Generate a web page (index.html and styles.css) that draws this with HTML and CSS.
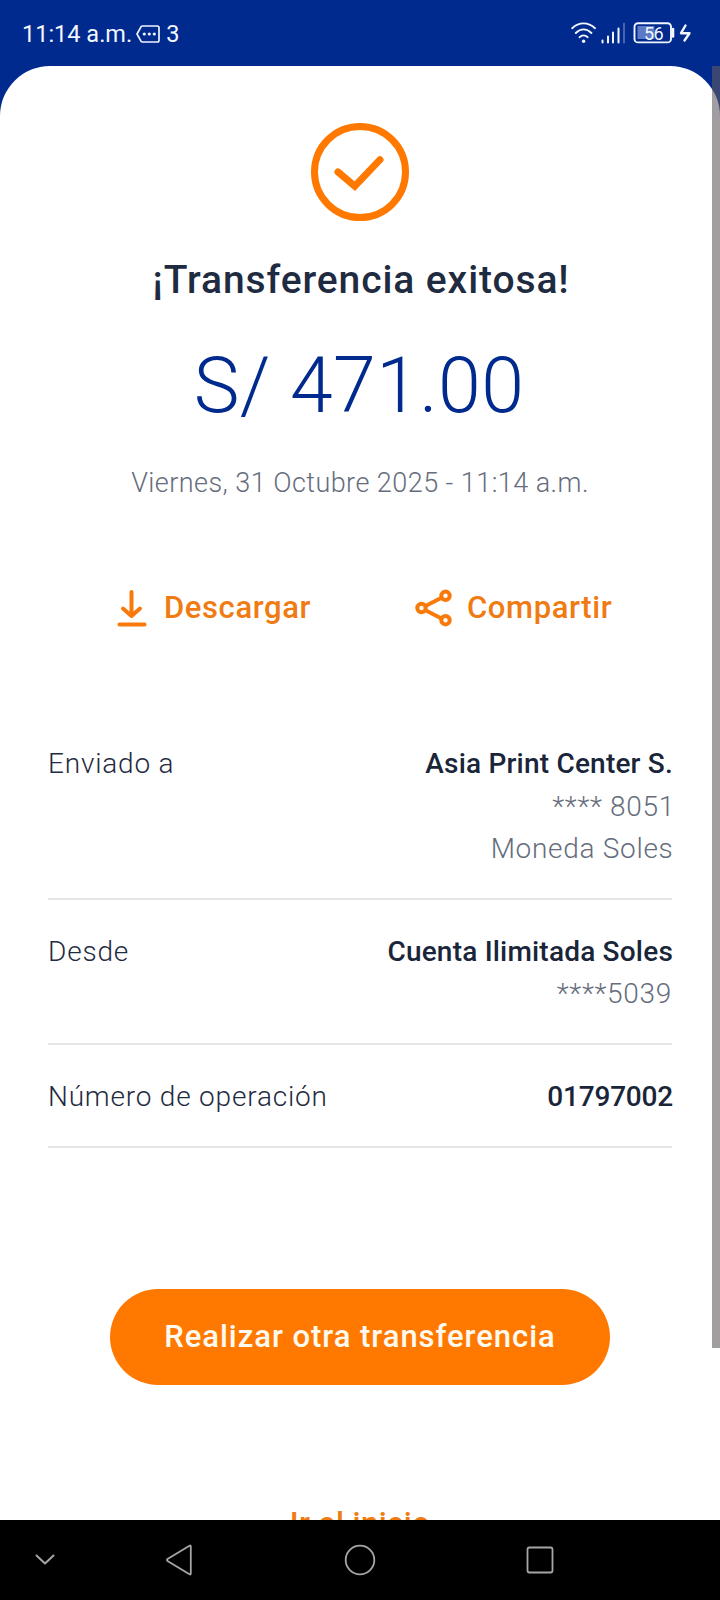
FILE: index.html
```html
<!DOCTYPE html>
<html lang="es">
<head>
<meta charset="utf-8">
<title>Transferencia exitosa</title>
<link rel="stylesheet" href="styles.css">
</head>
<body>
<div class="screen">
  <header class="status">
    <span class="clock">11:14 a.m.</span>
    <svg class="msg" width="24" height="18" viewBox="0 0 24 18" fill="none" stroke="#eef4ff" stroke-width="1.7" stroke-linejoin="round">
      <path d="M6.5 1H21.3Q23 1 23 2.7V15.3Q23 17 21.3 17H6.5Q5.6 17 5 16.2L1 9L5 1.8Q5.6 1 6.5 1Z"/>
      <g fill="#eef4ff" stroke="none"><circle cx="8.3" cy="9" r="1.6"/><circle cx="13.3" cy="9" r="1.6"/><circle cx="18.3" cy="9" r="1.6"/></g>
    </svg>
    <span class="count">3</span>
    <svg class="signals" width="122" height="24" viewBox="0 0 122 24" fill="none" stroke="#f2f7ff" stroke-linecap="round">
      <path stroke-width="1.9" d="M1.2 6.2C8-.2 17-.2 24 6.2M4.8 11C9.5 6.200 15.700 6.200 20.400 11M8.600 15.200C11 12.700 14.200 12.700 16.600 15.200"/>
      <circle cx="12.600" cy="19.300" r="1.700" fill="#f2f7ff" stroke="none"/>
      <path stroke-width="2" d="M31.500 18.500V20.500M37 14.500V20.500M42 10.500V20.500M47.500 6.500V20.500"/>
      <path stroke="#4964b3" stroke-width="2" d="M53 1.500V20.500"/>
      <rect x="66.500" y="4" width="17" height="13" fill="#5c7ac6" stroke="none"/>
      <rect x="63.500" y="1.200" width="36.500" height="19.200" rx="3.500" stroke-width="1.900"/>
      <path d="M102 7V14.500" stroke-width="2.600"/>
      <text x="73" y="17.600" class="level">56</text>
      <path d="M114.500 3.500L110 11.200H118.500L113.500 18.500" stroke-width="2.400" stroke-linejoin="round"/>
    </svg>
  </header>

  <main class="content">
    <section class="card">
      <svg class="check" width="98" height="98" viewBox="0 0 98 98" fill="none" stroke="#ff7800" stroke-width="7">
        <circle cx="49" cy="49" r="45.500"/>
        <path d="M27 49L43.800 63.200L69 36.700" stroke-linecap="round"/>
      </svg>
      <h1 class="title">¡Transferencia exitosa!</h1>
      <p class="amount">S/ 471.00</p>
      <p class="date">Viernes, 31 Octubre 2025 - 11:14 a.m.</p>

      <div class="actions">
        <a class="action">
          <svg width="30" height="38" viewBox="0 0 30 38" fill="none" stroke="#f97a0a" stroke-width="4" stroke-linecap="round" stroke-linejoin="round">
            <path d="M14.500 3V27M6 19.500L14.500 27L23 19.500M2.500 35.500H27.500"/>
          </svg>
          <span>Descargar</span>
        </a>
        <a class="action share">
          <svg width="38" height="38" viewBox="0 0 38 38" fill="none" stroke="#f97a0a" stroke-width="4">
            <path d="M10 17.200L26.500 8.800M10 21L26.500 29.500"/>
            <circle cx="6.500" cy="19" r="4.200"/><circle cx="30.500" cy="6.800" r="4.200"/><circle cx="30.500" cy="31.200" r="4.200"/>
          </svg>
          <span>Compartir</span>
        </a>
      </div>

      <dl class="details">
        <div class="row">
          <dt class="label">Enviado a</dt>
          <dd class="value"><strong>Asia Print Center S.</strong><span class="account">**** 8051</span><span class="currency">Moneda Soles</span></dd>
        </div>
        <div class="row">
          <dt class="label">Desde</dt>
          <dd class="value"><strong>Cuenta Ilimitada Soles</strong><span>****5039</span></dd>
        </div>
        <div class="row">
          <dt class="label">Número de operación</dt>
          <dd class="value"><strong class="operation">01797002</strong></dd>
        </div>
      </dl>

      <button class="primary">Realizar otra transferencia</button>
      <a class="home">Ir al inicio</a>
    </section>
    <div class="scrollbar"></div>
  </main>

  <nav class="navbar">
    <svg width="720" height="80" viewBox="0 0 720 80" fill="none" stroke="#a6a6a6" stroke-width="1.800" stroke-linejoin="round" stroke-linecap="round">
      <path d="M36.500 35.500L45 43.500L53.500 35.500" stroke-width="2"/>
      <path d="M190.800 26.500V53.500Q190.800 55 189.500 54.200L167.500 41Q166.500 40 167.500 39L189.500 25.800Q190.800 25 190.800 26.500Z"/>
      <circle cx="360" cy="40" r="14.300"/>
      <rect x="527.500" y="27.500" width="25" height="25" rx="2"/>
    </svg>
  </nav>
</div>
</body>
</html>
```
FILE: styles.css
```css
* { box-sizing: border-box; }

body {
  margin: 0;
  font-family: Roboto, sans-serif;
  color: #1f2b40;
}

.screen {
  display: flex;
  flex-direction: column;
  width: 720px;
  height: 1600px;
  overflow: hidden;
  background: #002a8d;
}

.status {
  display: flex;
  align-items: center;
  flex: none;
  height: 66px;
  padding: 1px 27px 0 22px;
  color: #f2f7ff;
  font-size: 23.5px;
}

.clock { letter-spacing: 0; }
.msg { margin-left: 4px; }
.count { margin-left: 6px; }
.signals { margin-left: auto; }

.level {
  fill: #f2f7ff;
  stroke: none;
  font-size: 18px;
  letter-spacing: -0.5px;
}

.content {
  position: relative;
  flex: 1;
  min-height: 0;
  overflow: hidden;
}

.card {
  display: flex;
  flex-direction: column;
  align-items: center;
  height: 1500px;
  padding: 57px 48px 0;
  border-radius: 50px 50px 0 0;
  background: #fff;
}

.check, .title, .amount, .date, .actions, .details, .primary, .home { flex: none; }

.title {
  margin: 35px 0 0;
  padding-left: 2px;
  font-size: 39px;
  font-weight: 470;
  line-height: 48px;
  letter-spacing: 0.9px;
}

.amount {
  margin: 37px 0 0;
  padding-right: 2px;
  font-size: 77px;
  font-weight: 340;
  line-height: 90px;
  letter-spacing: 0.4px;
  color: #002a8d;
}

.date {
  margin: 34px 0 0;
  font-size: 27px;
  font-weight: 320;
  line-height: 36px;
  letter-spacing: 0.45px;
  color: #666d7c;
}

.actions {
  display: flex;
  align-self: stretch;
  gap: 104px;
  height: 40px;
  margin-top: 87px;
  padding-left: 69px;
}

.action {
  display: flex;
  align-items: center;
  gap: 17px;
  color: #f07b12;
  font-size: 31px;
  font-weight: 480;
  line-height: 40px;
  letter-spacing: 0.6px;
}

.share { gap: 14px; }

.details {
  align-self: stretch;
  margin: 84px 0 0;
}

.row {
  display: flex;
  justify-content: space-between;
  padding: 31px 0 27.3px;
  border-bottom: 2px solid #e6e6e6;
  font-size: 28px;
  font-weight: 320;
  line-height: 42.5px;
}

.label { letter-spacing: 0.8px; }

.value {
  display: flex;
  flex-direction: column;
  align-items: flex-end;
  margin: 0;
  letter-spacing: 0.7px;
  color: #666d7c;
}

.value strong {
  margin-right: -1px;
  font-weight: 480;
  letter-spacing: 0.2px;
  color: #1a2539;
}

.value .operation { letter-spacing: -0.2px; }
.value .account { margin-right: -3px; }
.value .currency { margin-right: -1.5px; }

.primary {
  width: 500px;
  height: 96px;
  margin-top: 141px;
  padding: 1px 0 0;
  border: 0;
  border-radius: 48px;
  background: #ff7900;
  color: #fffaf0;
  font: 480 31px/40px Roboto, sans-serif;
  letter-spacing: 0.96px;
}

.home {
  margin-top: 119px;
  color: #f07b12;
  font-size: 31px;
  font-weight: 500;
  line-height: 40px;
  letter-spacing: 0.5px;
}

/* Overlaid scroll thumb, translucent over both the card and its corner */
.scrollbar {
  position: absolute;
  top: 0;
  right: 0;
  width: 8px;
  height: 1282px;
  background: rgba(98, 92, 98, 0.6);
}

.navbar {
  flex: none;
  height: 80px;
  background: #000;
}
```
